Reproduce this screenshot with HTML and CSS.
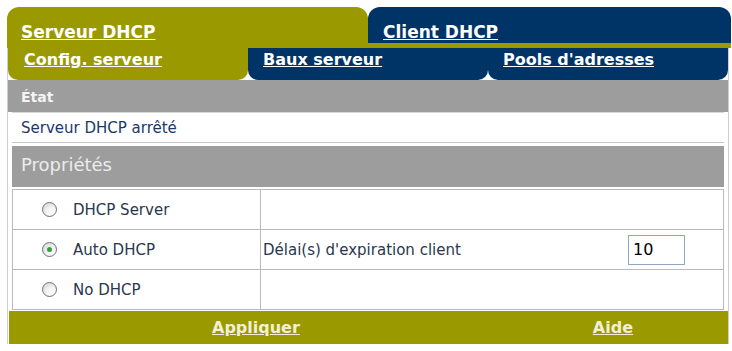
FILE: index.html
```html
<!DOCTYPE html>
<html lang="fr">
<head>
<meta charset="utf-8">
<title>DHCP</title>
<link rel="stylesheet" href="styles.css">
</head>
<body>
<div class="page">
  <div class="tabs">
    <div class="tab tab-olive"><a href="#">Serveur DHCP</a></div>
    <div class="tab tab-navy"><a href="#">Client DHCP</a></div>
  </div>
  <div class="panel">
    <div class="subtabs">
      <div class="subtab sub-olive"><a href="#">Config. serveur</a></div>
      <div class="subtab sub-navy"><a href="#">Baux serveur</a></div>
      <div class="subtab sub-navy"><a href="#">Pools d'adresses</a></div>
    </div>
    <div class="etat">État</div>
    <div class="body">
      <div class="status">Serveur DHCP arrêté</div>
      <div class="props">Propriétés</div>
      <table class="grid">
        <tr>
          <td class="c1"><label class="opt"><input type="radio" name="mode"><span>DHCP Server</span></label></td>
          <td class="c2"></td>
        </tr>
        <tr>
          <td class="c1"><label class="opt"><input type="radio" name="mode" checked><span>Auto DHCP</span></label></td>
          <td class="c2"><div class="field"><span>Délai(s) d'expiration client</span><input class="num" type="text" value="10"></div></td>
        </tr>
        <tr>
          <td class="c1"><label class="opt"><input type="radio" name="mode"><span>No DHCP</span></label></td>
          <td class="c2"></td>
        </tr>
      </table>
    </div>
    <div class="footer">
      <a href="#" class="apply">Appliquer</a>
      <a href="#" class="help">Aide</a>
    </div>
  </div>
</div>
</body>
</html>
```

FILE: styles.css
```css
html, body {
  margin: 0;
  padding: 0;
  background: #ffffff;
  font-family: "DejaVu Sans", Verdana, sans-serif;
}

.page {
  margin: 7px 0 0 7px;
  width: 724px;
}

.tabs {
  display: flex;
  height: 41px;
}

.tab {
  box-sizing: border-box;
  border-radius: 12px 12px 0 0;
  padding: 14px 0 0 14px;
  font-size: 17px;
  font-weight: bold;
  line-height: 22px;
}

.tab a,
.subtab a {
  color: #ffffff;
}

.tab-olive {
  width: 361px;
  background: #9a9a00;
}

.tab-navy {
  flex: 1;
  background: #003466;
  border-bottom: 5px solid #9a9a00;
  padding-left: 15px;
}

.panel {
  box-sizing: border-box;
  width: 722px;
  border-left: 1px solid #cfcfcf;
  border-right: 1px solid #cfcfcf;
}

.subtabs {
  display: flex;
  height: 32px;
}

.subtab {
  width: 240px;
  box-sizing: border-box;
  border-radius: 0 0 10px 10px;
  padding: 2px 0 0 15px;
  font-size: 16px;
  font-weight: bold;
  line-height: 20px;
}

.sub-olive {
  background: #9a9a00;
  padding-left: 16px;
}

.sub-navy {
  background: #003466;
}

.etat {
  box-sizing: border-box;
  height: 32px;
  background: #9d9d9d;
  color: #f4f4f4;
  font-size: 14px;
  font-weight: bold;
  line-height: 20px;
  padding: 7px 0 0 13px;
}

.body {
  padding: 0 4px;
}

.status {
  box-sizing: border-box;
  height: 31px;
  background: #ffffff;
  border-top: 1px solid #d8d8d8;
  border-bottom: 1px solid #c4c4c4;
  color: #1b3869;
  font-size: 15px;
  line-height: 19px;
  padding: 6px 0 0 9px;
}

.props {
  box-sizing: border-box;
  height: 41px;
  margin-top: 3px;
  background: #9d9d9d;
  color: #ececec;
  font-size: 18px;
  line-height: 22px;
  padding: 8px 0 0 9px;
}

.grid {
  width: 100%;
  margin-top: 2px;
  border-collapse: collapse;
  font-size: 15px;
  color: #29384d;
}

.grid td {
  border: 1px solid #b9b9b9;
  height: 39px;
  padding: 0;
}

.grid .c1 {
  width: 218px;
  padding-left: 29px;
}

.grid .c2 {
  padding-left: 2px;
}

.opt {
  display: flex;
  align-items: center;
  gap: 16px;
}

.opt input {
  appearance: none;
  -webkit-appearance: none;
  margin: 0;
  width: 15px;
  height: 15px;
  box-sizing: border-box;
  border: 1px solid #6f747c;
  border-radius: 50%;
  background: radial-gradient(circle at 65% 70%, #ffffff 0%, #f4f4f4 35%, #cfcfcf 100%);
  position: relative;
}

.opt input:checked::after {
  content: "";
  position: absolute;
  left: 4px;
  top: 4px;
  width: 5px;
  height: 5px;
  border-radius: 50%;
  background: #2fa33a;
}

.field {
  display: flex;
  align-items: center;
}

.num {
  margin: 0 38px 0 auto;
  width: 57px;
  height: 30px;
  box-sizing: border-box;
  border: 1px solid #8fa6c4;
  padding: 0 0 0 4px;
  font-family: "DejaVu Sans", Verdana, sans-serif;
  font-size: 16px;
  color: #000000;
  background: #ffffff;
}

.footer {
  box-sizing: border-box;
  display: flex;
  height: 33px;
  margin: 1px 0 0 1px;
  background: #9a9a00;
  padding: 7px 0 0 203px;
  font-size: 16px;
  font-weight: bold;
  line-height: 20px;
}

.footer a {
  color: #f3efd6;
}

.footer .help {
  margin-left: auto;
  margin-right: 95px;
}
```
